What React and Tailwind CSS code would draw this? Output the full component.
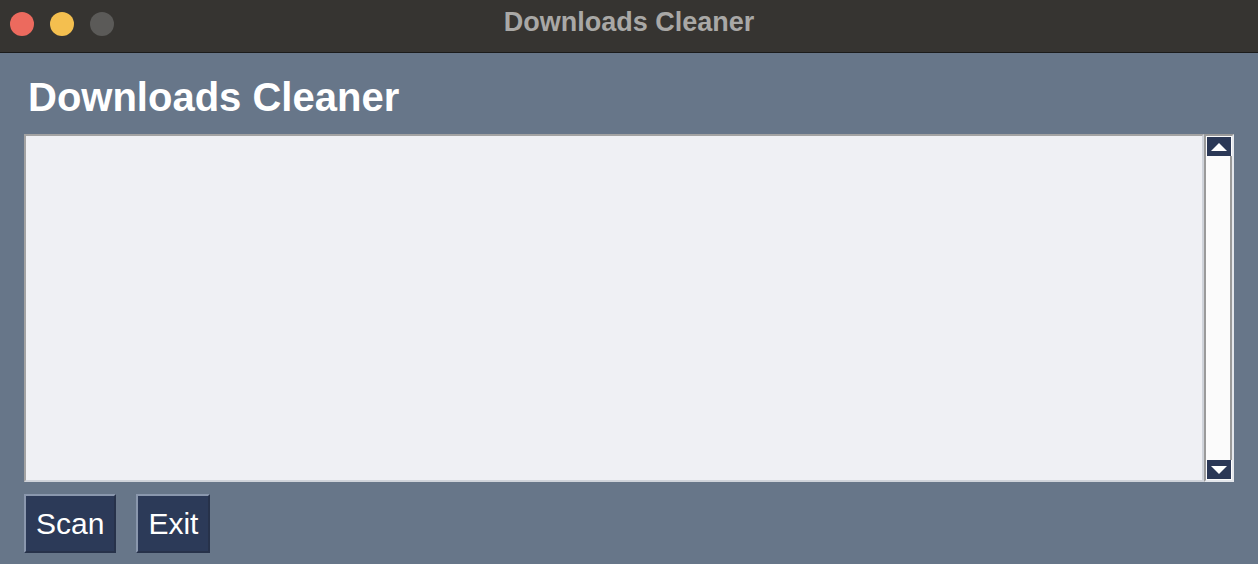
import React from 'react';

const font = { fontFamily: '"Liberation Sans", Arial, sans-serif' };

function TrafficLights() {
  return (
    <div className="flex items-center gap-[16px] pl-[10px] pt-[12px]">
      <span className="w-[24px] h-[24px] rounded-full bg-[#ec6a5e]" />
      <span className="w-[24px] h-[24px] rounded-full bg-[#f4bf4f]" />
      <span className="w-[24px] h-[24px] rounded-full bg-[#5b5a58]" />
    </div>
  );
}

function Scrollbar() {
  return (
    <div className="w-[30px] flex flex-col border-2 border-l-[#9a9a9a] border-t-[#9a9a9a] border-r-[#e4e7ec] border-b-[#e4e7ec] bg-[#fbfbfb]">
      <button className="h-[19px] mx-[1px] mt-[1px] bg-[#2b3856] flex items-center justify-center">
        <svg width="16" height="8" viewBox="0 0 16 8"><path d="M8 0 L16 8 L0 8 Z" fill="#ffffff" /></svg>
      </button>
      <div className="flex-1 border-r-2 border-[#9a9a9a] bg-[#fbfbfb]" />
      <button className="h-[19px] mx-[1px] mb-[1px] bg-[#2b3856] flex items-center justify-center">
        <svg width="16" height="8" viewBox="0 0 16 8"><path d="M0 0 L16 0 L8 8 Z" fill="#ffffff" /></svg>
      </button>
    </div>
  );
}

function Btn({ children }) {
  return (
    <button className="h-[59px] px-[10px] bg-[#2c3a58] text-white text-[30px] leading-none border-2 border-t-[#8a97ad] border-l-[#8a97ad] border-r-[#27324a] border-b-[#27324a]">
      {children}
    </button>
  );
}

export default function App() {
  return (
    <div className="w-[1258px] h-[564px] flex flex-col bg-[#677689] overflow-hidden" style={font}>
      <div className="h-[53px] shrink-0 relative flex items-start bg-[#363431] border-b border-[#1b1b1b]">
        <TrafficLights />
        <div className="absolute inset-x-0 top-[8px] flex justify-center text-[27px] leading-[28px] font-bold text-[#a9a8a6]">
          Downloads Cleaner
        </div>
      </div>
      <div className="flex-1 flex flex-col px-[24px] pt-[24px]">
        <h1 className="text-[40px] leading-[40px] font-bold text-white pl-[4px]">Downloads Cleaner</h1>
        <div className="mt-[17px] h-[348px] flex">
          <div className="flex-1 bg-[#eff0f4] border-2 border-[#a3a3a3] border-r-[#cfd3da] border-b-[#cfd3da]" />
          <Scrollbar />
        </div>
        <div className="mt-[12px] flex gap-[20px]">
          <Btn>Scan</Btn>
          <Btn>Exit</Btn>
        </div>
      </div>
    </div>
  );
}
